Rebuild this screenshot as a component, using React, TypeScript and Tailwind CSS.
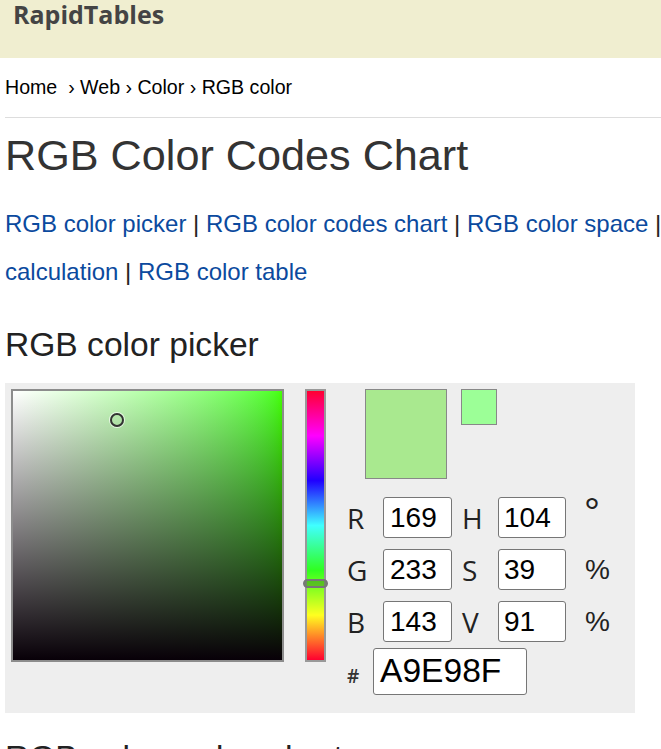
import React from "react";

const arial = "font-['Liberation_Sans',Arial,sans-serif]";
const open = "font-['Open_Sans','Noto_Sans',sans-serif]";

const Field = ({ label, value, label2, value2, unit }: { label: string; value: string; label2: string; value2: string; unit: string }) => {
  return (
    <div className="flex items-center h-[41px]">
      <div className={`${open} w-[36px] text-[28px] leading-none text-[#222]`}>{label}</div>
      <div className={`${arial} w-[69px] h-[41px] bg-white border border-[#767676] rounded-[3px] pl-[6px] flex items-center text-[28px] text-black`}>
        {value}
      </div>
      <div className={`${open} w-[46px] pl-[10px] text-[28px] leading-none text-[#222]`}>{label2}</div>
      <div className={`${arial} w-[68px] h-[41px] bg-white border border-[#767676] rounded-[3px] pl-[5px] flex items-center text-[28px] text-black`}>
        {value2}
      </div>
      {unit === "°" ? (
        <div className={`${arial} ml-[18px] -mt-[12px] text-[40px] leading-none text-[#222]`}>°</div>
      ) : (
        <div className={`${arial} ml-[19px] text-[28px] leading-none text-[#222]`}>{unit}</div>
      )}
    </div>
  );
};

const App = () => {
  return (
    <div className="w-[661px] min-h-[749px] bg-white overflow-hidden">
      {/* header bar */}
      <div className="h-[58px] bg-[#f0eed0] pl-[13px]">
        <div className={`${open} text-[25px] leading-[28px] font-bold text-[#444]`}>RapidTables</div>
      </div>

      <div className="pl-[5px]">
        <div className={`${arial} mt-[17px] text-[19.6px] leading-[24px] text-black whitespace-pre`}>
          Home  › Web › Color › RGB color
        </div>
        <div className="mt-[18px] h-px bg-[#dddddd]"></div>

        <h1 className={`${arial} mt-[12px] text-[43.2px] leading-[50px] text-[#333]`}>RGB Color Codes Chart</h1>

        <p className={`${arial} mt-[20px] text-[24px] leading-[48px] text-[#222] whitespace-nowrap`}>
          <a className="text-[#0b4a9e]">RGB color picker</a> | <a className="text-[#0b4a9e]">RGB color codes chart</a> |{" "}
          <a className="text-[#0b4a9e]">RGB color space</a> |
          <br />
          <a className="text-[#0b4a9e]">calculation</a> | <a className="text-[#0b4a9e]">RGB color table</a>
        </p>

        <h2 className={`${arial} mt-[29px] text-[33.6px] leading-[40px] text-[#222]`}>RGB color picker</h2>

        {/* picker panel */}
        <div className="mt-[18px] w-[630px] h-[330px] bg-[#eeeeee] pl-[6px] pt-[6px] flex">
          <div className="relative w-[273px] h-[273px] border-2 border-[#8c8c8c] bg-linear-to-r from-white to-[#44ff00]">
            <div className="absolute inset-0 bg-linear-to-t from-[#080008] to-transparent"></div>
            <div className="absolute left-[97px] top-[22px] w-[14px] h-[14px] rounded-full border-2 border-[#333] ring-1 ring-white/70"></div>
          </div>

          <div className="relative ml-[21px] w-[21px] h-[273px] border-2 border-[#999] bg-[linear-gradient(to_bottom,#ff0030,#ff00ff,#2000ff,#40ffff,#30ff20,#ffff20,#ff0030)]">
            <div className="absolute -left-[4px] top-[188px] w-[25px] h-[9px] rounded-full border-2 border-[#777] bg-[#3a6a20]/40"></div>
          </div>

          <div className="ml-[21px] flex flex-col">
            <div className="flex items-start ml-[18px]">
              <div className="w-[82px] h-[90px] bg-[#a9e98f] border border-[#888]"></div>
              <div className="ml-[14px] w-[36px] h-[36px] bg-[#9cff97] border border-[#888]"></div>
            </div>

            <div className="mt-[18px] flex flex-col gap-[11px]">
              <Field label="R" value="169" label2="H" value2="104" unit="°" />
              <Field label="G" value="233" label2="S" value2="39" unit="%" />
              <Field label="B" value="143" label2="V" value2="91" unit="%" />
            </div>

            <div className="mt-[6px] flex items-end">
              <div className={`${open} w-[26px] pb-[9px] text-[19px] font-semibold leading-none text-[#333]`}>#</div>
              <div className={`${arial} w-[154px] h-[47px] bg-white border border-[#767676] rounded-[3px] pl-[6px] flex items-center text-[33.6px] text-black`}>
                A9E98F
              </div>
            </div>
          </div>
        </div>

        <h2 className={`${arial} mt-[25px] text-[33.6px] leading-[40px] text-[#222]`}>RGB color codes chart</h2>
      </div>
    </div>
  );
};

export default App;
